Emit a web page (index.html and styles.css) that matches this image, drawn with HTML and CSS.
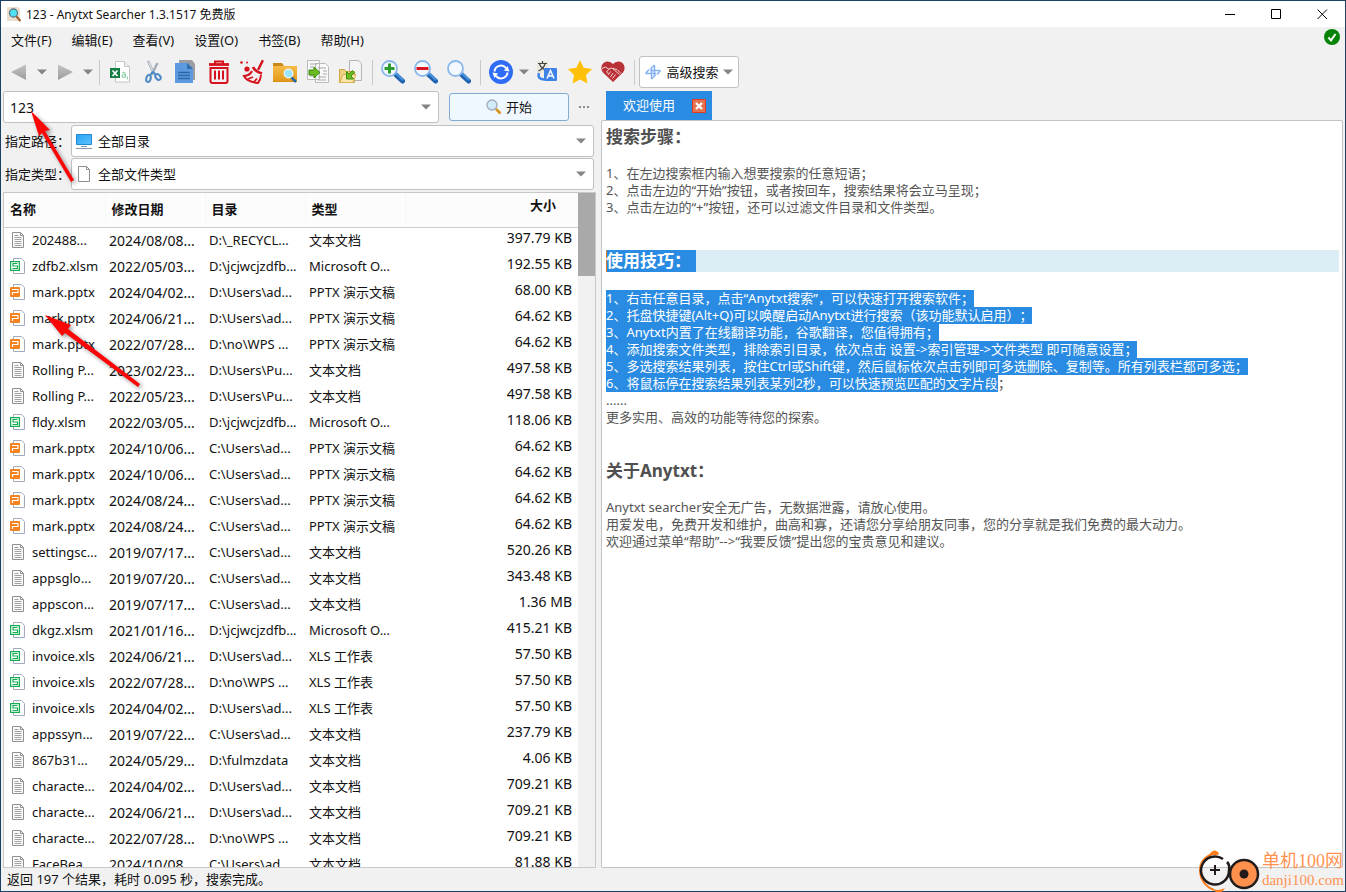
FILE: index.html
```html
<!DOCTYPE html>
<html lang="zh-CN">
<head>
<meta charset="utf-8">
<title>123 - Anytxt Searcher 1.3.1517 免费版</title>
<link rel="stylesheet" href="styles.css">
</head>
<body>
<svg class="defs" aria-hidden="true">
  <defs>
    <linearGradient id="grey" x1="0" y1="0" x2="0" y2="1"><stop offset="0" stop-color="#c4c4c4"/><stop offset="1" stop-color="#9c9c9c"/></linearGradient>
    <linearGradient id="amber" x1="0" y1="0" x2="0" y2="1"><stop offset="0" stop-color="#f5bb45"/><stop offset="1" stop-color="#e3991a"/></linearGradient>
    <linearGradient id="screen" x1="0" y1="0" x2="1" y2="1"><stop offset="0" stop-color="#29a3f5"/><stop offset="1" stop-color="#5cc4ff"/></linearGradient>
    <symbol id="down" viewBox="0 0 10 6"><path d="M0 .5h10L5 5.500z" fill="#858585"/></symbol>
    <symbol id="lens" viewBox="0 0 24 24"><path d="M14 14l7.500 7" stroke="#1f62b0" stroke-width="5" stroke-linecap="round"/><path d="M14.500 13l7 6.500" stroke="#4b94de" stroke-width="2" stroke-linecap="round"/><circle cx="8.500" cy="8.500" r="7.500" fill="#f4f9ff" stroke="#8bb8ea" stroke-width="1.800"/></symbol>
    <symbol id="txt" viewBox="0 0 16 16"><path d="M2.500.5h8l3 3v12h-11z" fill="#fafafa" stroke="#909090"/><path d="M10.500.5v3h3" fill="none" stroke="#909090"/><path d="M4.500 3.500h4M4.500 5.500h7M4.500 7.500h7M4.500 9.500h7M4.500 11.500h7M4.500 13.500h7" stroke="#a2a2a2"/></symbol>
    <symbol id="xls" viewBox="0 0 16 16"><path d="M3.500.5h8l3 3v12h-11z" fill="#fff" stroke="#a3abba"/><path d="M.6 3.600h8.800v8.800H.6z" fill="#fff" stroke="#17ad55" stroke-width="1.200"/><path d="M7.500 5.500H3v2.500h4.500v2.500H2.500" fill="none" stroke="#17ad55" stroke-width="1.200"/></symbol>
    <symbol id="ppt" viewBox="0 0 16 16"><path d="M3.500.5h8l3 3v12h-11z" fill="#fff" stroke="#a3abba"/><rect y="3" width="10" height="10" rx="1" fill="#f5821f"/><path d="M2.500 11V8.500H8V5.500H2" fill="none" stroke="#fff" stroke-width="1.200"/></symbol>
  </defs>
</svg>
<main class="window">
  <header class="titlebar">
    <svg class="i16" viewBox="0 0 16 16"><path d="M1 1.500L11 .5l3 2V15H1z" fill="#eadfce"/><path d="M10 10l4.500 5" stroke="#a05a28" stroke-width="2"/><circle cx="7.500" cy="7" r="4" fill="#4ee3f2" stroke="#557b8c" stroke-width="1.300"/></svg>
    <h1>123 - Anytxt Searcher 1.3.1517 免费版</h1>
    <button class="win" aria-label="最小化"><svg viewBox="0 0 11 11"><path d="M0 5.500h10"/></svg></button>
    <button class="win" aria-label="最大化"><svg viewBox="0 0 11 11"><path d="M.5.5h9v9h-9z"/></svg></button>
    <button class="win" aria-label="关闭"><svg viewBox="0 0 11 11"><path d="M.5.5l9.500 9.500M10 .5L.5 10"/></svg></button>
  </header>
  <nav class="menubar">
    <button>文件(F)</button><button>编辑(E)</button><button>查看(V)</button><button>设置(O)</button><button>书签(B)</button><button>帮助(H)</button>
    <svg class="i16 synced" viewBox="0 0 16 16"><circle cx="8" cy="8" r="8" fill="#078407"/><path d="M4.500 8.500l2.500 2.800L11.500 5" fill="none" stroke="#fff" stroke-width="2"/></svg>
  </nav>
  <div class="toolbar">
    <button class="tool" aria-label="后退"><svg viewBox="0 0 24 24"><path d="M4 12L19 4.500v15.500z" fill="url(#grey)"/></svg></button>
    <button class="drop" aria-label="后退记录"><svg><use href="#down"/></svg></button>
    <button class="tool" aria-label="前进"><svg viewBox="0 0 24 24"><path d="M20 12L5 4.500v15.500z" fill="url(#grey)"/></svg></button>
    <button class="drop" aria-label="前进记录"><svg><use href="#down"/></svg></button>
    <span class="sep"></span>
    <button class="tool" aria-label="导出"><svg viewBox="0 0 24 24"><path d="M7.500 1.500h9l5 5v15.500h-14z" fill="#fff" stroke="#c6c6c6"/><path d="M16.500 1.500v5h5" fill="#eee" stroke="#c6c6c6"/><rect x="2" y="8" width="10" height="10" fill="#167c45"/><path d="M4.500 10.500l5 5.500M9.500 10.500l-5 5.500" stroke="#fff" stroke-width="1.700"/><path d="M14 13q3.500-1 3.500 1v3.500M17.500 14.500q-3.500 0-3.500 1.500t1.500 1.500 2-2M19.500 16.500v3" fill="none" stroke="#8fcfa9" stroke-width="1.200"/></svg></button>
    <button class="tool" aria-label="剪切"><svg viewBox="0 0 24 24"><path d="M7 1l6 13M16.500 3l-6 12" stroke="#a3acb7" stroke-width="2.400"/><path d="M7.500 2l5 11" stroke="#e5eaf0"/><ellipse cx="7.500" cy="18.500" rx="2.200" ry="3.500" transform="rotate(15 7.500 18.500)" fill="none" stroke="#4d8ac6" stroke-width="2"/><path d="M9 15l3-3 3 3" fill="none" stroke="#4d8ac6" stroke-width="2"/><ellipse cx="17" cy="17" rx="2.200" ry="3.200" transform="rotate(-42 17 17)" fill="none" stroke="#4d8ac6" stroke-width="2"/></svg></button>
    <button class="tool" aria-label="复制"><svg viewBox="0 0 24 24"><path d="M5 0h13l3 4v16H5z" fill="#9b9fa4"/><path d="M1 3h13l5 6v14H1z" fill="#5c99de"/><path d="M13 3v6h6z" fill="#326dad"/><path d="M4 12.500h12M4 15.500h12M4 18.500h12" stroke="#2f69aa" stroke-width="1.300"/></svg></button>
    <button class="tool" aria-label="删除"><svg viewBox="0 0 24 24" fill="none" stroke="#d5121d"><path d="M2 4.500h20" stroke-width="2.800"/><path d="M8 4V1.500h8V4" stroke-width="2"/><path d="M3.500 8h17v13q0 2-2 2h-13q-2 0-2-2z" stroke-width="2"/><path d="M8 10.500v9M12 10.500v9M16 10.500v9" stroke-width="2"/></svg></button>
    <button class="tool" aria-label="清理"><svg viewBox="0 0 24 24" fill="none" stroke="#d5121d"><path d="M22.500 1L18.500 9" stroke-width="2.500" stroke-linecap="round"/><path d="M13 7q2 4.500 9 6.500" stroke-width="2.800"/><path d="M12 11q-2 4.500-8 5 3 6 14 7 2.500-3 3-8" stroke-width="2"/><path d="M8 19l5-2M14 22l3-3.500" stroke-width="1.800"/><circle cx="7" cy="9" r="2.600" fill="#d5121d" stroke="none"/><circle cx="1.500" cy="2.500" r="1.300" fill="#d5121d" stroke="none"/><circle cx="7" cy="2.500" r="1" fill="#d5121d" stroke="none"/></svg></button>
    <button class="tool" aria-label="打开目录"><svg viewBox="0 0 24 24"><path d="M0 3h9l2 3h13v16H0z" fill="#c9861a"/><path d="M0 6h24v15.500H0z" fill="url(#amber)"/><path d="M18 17l5 5" stroke="#2868a5" stroke-width="2.500"/><circle cx="15.500" cy="13.500" r="4.300" fill="#9be5ff" stroke="#eaf8ff" stroke-width="1.300"/></svg></button>
    <button class="tool" aria-label="复制文件"><svg viewBox="0 0 24 24"><path d="M1.500.5h12v19h-12zM9.500 3.500h10l3 3v16h-13z" fill="#f8f8f8" stroke="#bbb"/><path d="M4 4h7M4 7h4M4 16h4M12 8h8M12 17h8M12 20h8M17 11h4M17 14h4" stroke="#a9a9a9"/><path d="M3 10h5V7l6 5.500L8 18v-3H3z" fill="#68ba1f" stroke="#3d8c12"/></svg></button>
    <button class="tool" aria-label="移动文件"><svg viewBox="0 0 24 24"><path d="M10.500.5h9l3 3v17h-12z" fill="#f4f4f4" stroke="#b4b4b4"/><path d="M.5 9.500h5l2 2h8v11H.5z" fill="#ebcf82" stroke="#d3a641"/><path d="M1 22.500l3-8h13l-3 8z" fill="#f8e6a8" stroke="#d8b452"/><path d="M7.500 19v-7.500l2.500 2.500 3.500-3.500 2 2-3.500 3.500L14.500 19z" fill="#6cbc22" stroke="#3d8c12"/></svg></button>
    <span class="sep"></span>
    <button class="tool" aria-label="放大"><svg viewBox="0 0 24 24"><use href="#lens"/><path d="M8.500 3.500v10M3.500 8.500h10" stroke="#299c2d" stroke-width="3"/></svg></button>
    <button class="tool" aria-label="缩小"><svg viewBox="0 0 24 24"><use href="#lens"/><path d="M2.500 8.500h12" stroke="#dc1420" stroke-width="3"/></svg></button>
    <button class="tool" aria-label="重置缩放"><svg viewBox="0 0 24 24"><use href="#lens"/></svg></button>
    <span class="sep"></span>
    <button class="tool" aria-label="刷新"><svg viewBox="0 0 24 24"><circle cx="12" cy="12" r="12" fill="#2f6df6"/><path d="M5.500 11.500A6.500 6.500 0 0 1 17 8M18.500 12.500A6.500 6.500 0 0 1 7 16" fill="none" stroke="#fff" stroke-width="2"/><path d="M15 10.500l5.500 1-2-5.500zM9 13.500l-5.500-1 2 5.500z" fill="#fff"/></svg></button>
    <button class="drop" aria-label="刷新选项"><svg><use href="#down"/></svg></button>
    <button class="tool" aria-label="翻译"><svg viewBox="0 0 24 24"><path d="M2 1h11v12H2z" fill="#ece8dc"/><path d="M3 3.500h9M7.500 1v2.500M3.500 11Q9 8 10 4M4.500 4q2 5 7 6.500" fill="none" stroke="#444" stroke-width="1.200"/><path d="M4 13q-2 6 5 6.500" fill="none" stroke="#3f83e9" stroke-width="2.500"/><rect x="9" y="8" width="13" height="13" rx="1" fill="#3f83e9"/><path d="M12 18.500l3.500-8 3.500 8M13.500 16h4" fill="none" stroke="#fff" stroke-width="1.500"/></svg></button>
    <button class="tool" aria-label="收藏"><svg viewBox="0 0 24 24"><path d="M12 0l3.700 7.700 8.300 1.200-6 6 1.400 8.600L12 19.400 4.600 23.500 6 14.900l-6-6 8.300-1.200z" fill="#ffc107"/></svg></button>
    <button class="tool" aria-label="捐助"><svg viewBox="0 0 24 24"><path d="M12 22L2 12.500C-2 7 2 1.500 6.500 1.500Q10 1.500 12 4q2-2.500 5.500-2.500C22 1.500 26 7 22 12.500z" fill="#b93036"/><path d="M1 8.500l3.500-1.500 3 2 3.500-1 7.500 6.500M8 9l-2.500 3 2 1.500M9.500 11.500l-2.500 3.500M12 13l-2.500 4M14.500 14.500l-3 4M12 8.500l4 1 4 4" fill="none" stroke="#f5d5d5"/></svg></button>
    <span class="sep"></span>
    <button class="advanced"><svg class="i16" viewBox="0 0 16 16" fill="none" stroke="#86b2f2" stroke-width="1.500"><path d="M.5 9.500H11M4 5.500L.5 9.500M15.500 6.500H5M12 10.500l3.500-4M9.500 1v11.500M9.500 1L5.500 5M6.500 15V4M6.500 15l4-4"/></svg>高级搜索<svg class="arrow"><use href="#down"/></svg></button>
  </div>
  <div class="panes">
    <section class="left">
      <div class="searchrow">
        <div class="combo"><input type="text" value="123" aria-label="搜索内容"><button class="drop" aria-label="搜索历史"><svg><use href="#down"/></svg></button></div>
        <button class="start"><svg class="i16" viewBox="0 0 16 16"><path d="M10 10l4.500 4.500" stroke="#d99420" stroke-width="2.600"/><circle cx="6" cy="6" r="5" fill="#d3ebfa" stroke="#a0a9b5" stroke-width="1.300"/></svg>开始</button>
        <button class="more" aria-label="更多"><svg viewBox="0 0 11 3"><path d="M0 0h2v2H0zM4 0h2v2H4zM8 0h2v2H8z" fill="#8c8c8c"/></svg></button>
      </div>
      <div class="field"><label for="path">指定路径：</label><div class="combo"><svg class="i16" viewBox="0 0 16 16"><path d="M.5 1.500h15v10H.5z" fill="url(#screen)" stroke="#2487cf"/><path d="M5 13.500h6M0 15.500h16" stroke="#8799aa"/></svg><select id="path"><option>全部目录</option></select><svg class="arrow"><use href="#down"/></svg></div></div>
      <div class="field"><label for="type">指定类型：</label><div class="combo"><svg class="i16" viewBox="0 0 16 16"><path d="M2.500.5h8l3 3v12h-11z" fill="#fff" stroke="#909090"/><path d="M10.500.5v3h3" fill="none" stroke="#909090"/></svg><select id="type"><option>全部文件类型</option></select><svg class="arrow"><use href="#down"/></svg></div></div>
      <div class="results">
        <div class="tablebox">
          <table>
            <thead><tr><th class="c1">名称</th><th class="c2">修改日期</th><th class="c2">目录</th><th class="c2">类型</th><th class="size">大小</th></tr></thead>
            <tbody id="rows"></tbody>
          </table>
        </div>
        <div class="scroll"><div class="thumb"></div></div>
      </div>
    </section>
    <section class="right">
      <div class="tabs"><div class="tab">欢迎使用<button aria-label="关闭标签"><svg viewBox="0 0 14 14"><path d="M.5.5h13v13H.5z" fill="#e3744f" stroke="#e23a22"/><path d="M4 4l6 6M10 4l-6 6" stroke="#fff" stroke-width="2.200"/></svg></button></div></div>
      <article class="doc">
        <h2>搜索步骤：</h2>
        <p>1、在左边搜索框内输入想要搜索的任意短语；<br>2、点击左边的“开始”按钮，或者按回车，搜索结果将会立马呈现；<br>3、点击左边的“+”按钮，还可以过滤文件目录和文件类型。</p>
        <h2 class="current"><mark>使用技巧：</mark></h2>
        <p><mark>1、右击任意目录，点击“Anytxt搜索”，可以快速打开搜索软件；</mark><br><mark>2、托盘快捷键(Alt+Q)可以唤醒启动Anytxt进行搜索（该功能默认启用）；</mark><br><mark>3、Anytxt内置了在线翻译功能，谷歌翻译，您值得拥有；</mark><br><mark>4、添加搜索文件类型，排除索引目录，依次点击 设置-&gt;索引管理-&gt;文件类型 即可随意设置；</mark><br><mark>5、多选搜索结果列表，按住Ctrl或Shift键，然后鼠标依次点击列即可多选删除、复制等。所有列表栏都可多选；</mark><br><mark>6、将鼠标停在搜索结果列表某列2秒，可以快速预览匹配的文字片段</mark>；<br>......<br>更多实用、高效的功能等待您的探索。</p>
        <h2>关于Anytxt：</h2>
        <p>Anytxt searcher安全无广告，无数据泄露，请放心使用。<br>用爱发电，免费开发和维护，曲高和寡，还请您分享给朋友同事，您的分享就是我们免费的最大动力。<br>欢迎通过菜单“帮助”--&gt;“我要反馈”提出您的宝贵意见和建议。</p>
      </article>
    </section>
  </div>
  <footer class="status">返回 197 个结果，耗时 0.095 秒，搜索完成。</footer>
</main>
<svg class="pointers" viewBox="0 0 150 400" aria-hidden="true"><g fill="#fb0505"><path d="M31 111L50 130 45 131 74 180 71 182 42 133 39 136z"/><path d="M45 315L71 325 68 329 140 384 138 387 65 333 62 336z"/></g></svg>
<div class="watermark">
  <svg viewBox="0 0 64 42" fill="none"><path d="M16 40A21 21 0 0 1 2 20Q2 8 17 3" stroke="#ff7b17" stroke-width="2"/><path d="M11 5Q16-3 21 3l-1 2zM13 38q6 4 14 0l-3 4h-6z" fill="#ff7b17"/><path d="M25 9A14 14 0 1 0 31 20Q32 15 29 12" stroke="#211b1b" stroke-width="2.500"/><path d="M17 15v10M12 20h10" stroke="#211b1b" stroke-width="2"/><circle cx="46" cy="24" r="14" fill="#ff914c" stroke="#211b1b" stroke-width="2.500"/><circle cx="46" cy="24" r="4.500" fill="#211b1b"/></svg>
  <div><strong>单机100网</strong><span>danji100.com</span></div>
</div>
<script src="app.js"></script>
</body>
</html>
```
FILE: styles.css
```css
* { box-sizing: border-box; }
body { margin: 0; color: #111; font: 13px/17px "Noto Sans", "Noto Sans CJK SC", sans-serif; text-spacing-trim: space-all; }
button, input, select { font: inherit; color: inherit; background: none; border: 0; padding: 0; margin: 0; }
h1, h2, p { margin: 0; }
svg { display: block; flex: none; overflow: visible; }
.defs { position: absolute; width: 0; height: 0; }
.i16 { width: 16px; height: 16px; }
.arrow, .drop svg { width: 10px; height: 6px; }
.window { display: flex; flex-direction: column; height: 100vh; border: 1px solid #1c4167; background: #f1f1f1; }
.titlebar { display: flex; align-items: center; height: 26px; padding-left: 5px; background: #fff; }
.titlebar h1 { flex: 1; margin-left: 4px; font-size: 12px; font-weight: 400; white-space: nowrap; }
.win { display: grid; place-items: center; width: 46px; height: 26px; }
.win svg { width: 11px; height: 11px; fill: none; stroke: #000; }
.menubar { display: flex; align-items: center; gap: 20px; height: 26px; padding: 0 5px 0 10px; }
.synced { margin: 0 0 6px auto; }
.toolbar { display: flex; align-items: center; height: 38px; padding-left: 1px; }
.tool { display: grid; place-items: center; width: 33px; height: 32px; }
.tool svg { width: 24px; height: 24px; }
.drop { display: grid; place-items: center; width: 13px; height: 30px; }
.sep { width: 1px; height: 25px; margin: 0 3px 0 5px; background: #c9c9c9; }
.advanced { display: flex; align-items: center; justify-content: center; gap: 5px; width: 100px; height: 32px; margin-left: 1px; border: 1px solid #c0c0c0; border-radius: 3px; background: #fff; }
.advanced .arrow { margin-left: -1px; }
.panes { display: grid; grid-template-columns: 595fr 742fr; gap: 5px; flex: 1; min-height: 0; padding-right: 2px; }
.left, .right { display: flex; flex-direction: column; min-width: 0; min-height: 0; }
.left { padding-left: 2px; gap: 1px; }
.searchrow { display: flex; align-items: center; margin-bottom: 1px; }
.combo { display: flex; align-items: center; flex: 1; min-width: 0; height: 32px; padding: 0 7px 0 4px; border: 1px solid #c0c0c0; border-radius: 3px; background: #fff; }
.combo input, .combo select { flex: 1; min-width: 0; height: 28px; appearance: none; outline: 0; }
.combo select { padding-left: 6px; }
.searchrow .combo { padding: 0 6px; }
.searchrow input { font-size: 14px; }
.start { display: flex; align-items: center; justify-content: center; gap: 4px; width: 120px; height: 28px; margin-left: 10px; border: 1px solid #80acd3; border-radius: 3px; background: #f0f8ff; }
.more { display: grid; place-items: center; width: 27px; height: 28px; padding-left: 4px; }
.more svg { width: 11px; height: 3px; }
.field { display: flex; align-items: center; padding-right: 2px; }
.field label { width: 68px; padding-left: 2px; white-space: nowrap; }
.results { display: flex; flex: 1; min-height: 0; margin-top: 1px; border: 1px solid #c8c8c8; background: #fff; }
.tablebox { flex: 1; min-width: 0; overflow: hidden; }
table { width: 100%; table-layout: fixed; border-collapse: collapse; }
th { height: 34px; padding: 0 0 0 6px; border-right: 1px solid #f7f7f7; border-bottom: 1px solid #ccc; background: #fcfcfc; text-align: left; }
.c1 { width: 101px; }
.c2 { width: 100px; }
th.size { padding: 0 22px 8px 0; text-align: right; border-right: 0; }
td { height: 26px; padding: 0 0 0 4px; white-space: nowrap; overflow: hidden; }
td.date { font-size: 14px; }
td.size { padding: 0 6px 5px 0; font-size: 14px; text-align: right; }
.name { display: flex; align-items: center; gap: 6px; padding-left: 2px; }
.name svg { width: 16px; height: 16px; }
.scroll { width: 17px; background: #f1f1f1; }
.thumb { height: 83px; background: #a9a9a9; }
.tabs { display: flex; height: 29px; padding-left: 5px; }
.tab { display: flex; align-items: center; gap: 17px; padding: 0 6px 0 17px; background: #2a8be2; color: #fff; }
.tab svg { width: 14px; height: 14px; }
.doc { flex: 1; min-height: 0; padding: 5px 3px 0 4px; border: 1px solid #c4c4c4; border-radius: 2px; background: #fff; color: #555; overflow: hidden; }
.doc h2 { font-size: 17px; line-height: 22px; color: #505050; }
.doc p { margin: 17px 0 34px; }
.doc .current { background: #dcedf6; }
.doc .current + p { margin-top: 18px; }
mark { display: inline-block; background: #2a8be2; color: #fff; vertical-align: top; }
.current mark { padding-right: 5px; box-shadow: inset 1px 0 #d87a20; }
.status { height: 23px; padding: 3px 6px; }
.pointers { position: absolute; left: 0; top: 0; width: 150px; height: 400px; pointer-events: none; filter: drop-shadow(2px 2px 2px #0006); }
.watermark { position: absolute; right: 2px; bottom: 0; display: flex; align-items: center; color: #ff9250; font-family: "Liberation Serif", "Noto Sans CJK SC", serif; }
.watermark svg { width: 64px; height: 42px; }
.watermark strong, .watermark span { display: block; font-weight: 400; line-height: 19px; white-space: nowrap; }
.watermark strong { font-size: 18px; }
.watermark span { font-size: 15px; }
```
FILE: app.js
```js
const TXT = "文本文档", PPT = "PPTX 演示文稿", XLS = "XLS 工作表", OFFICE = "Microsoft O...";
const results = [
  ["txt", "202488...", "2024/08/08", "D:\\_RECYCL...", TXT, "397.79 KB"],
  ["xls", "zdfb2.xlsm", "2022/05/03", "D:\\jcjwcjzdfb...", OFFICE, "192.55 KB"],
  ["ppt", "mark.pptx", "2024/04/02", "D:\\Users\\ad...", PPT, "68.00 KB"],
  ["ppt", "mark.pptx", "2024/06/21", "D:\\Users\\ad...", PPT, "64.62 KB"],
  ["ppt", "mark.pptx", "2022/07/28", "D:\\no\\WPS ...", PPT, "64.62 KB"],
  ["txt", "Rolling P...", "2023/02/23", "D:\\Users\\Pu...", TXT, "497.58 KB"],
  ["txt", "Rolling P...", "2022/05/23", "D:\\Users\\Pu...", TXT, "497.58 KB"],
  ["xls", "fldy.xlsm", "2022/03/05", "D:\\jcjwcjzdfb...", OFFICE, "118.06 KB"],
  ["ppt", "mark.pptx", "2024/10/06", "C:\\Users\\ad...", PPT, "64.62 KB"],
  ["ppt", "mark.pptx", "2024/10/06", "C:\\Users\\ad...", PPT, "64.62 KB"],
  ["ppt", "mark.pptx", "2024/08/24", "C:\\Users\\ad...", PPT, "64.62 KB"],
  ["ppt", "mark.pptx", "2024/08/24", "C:\\Users\\ad...", PPT, "64.62 KB"],
  ["txt", "settingsc...", "2019/07/17", "C:\\Users\\ad...", TXT, "520.26 KB"],
  ["txt", "appsglo...", "2019/07/20", "C:\\Users\\ad...", TXT, "343.48 KB"],
  ["txt", "appscon...", "2019/07/17", "C:\\Users\\ad...", TXT, "1.36 MB"],
  ["xls", "dkgz.xlsm", "2021/01/16", "D:\\jcjwcjzdfb...", OFFICE, "415.21 KB"],
  ["xls", "invoice.xls", "2024/06/21", "D:\\Users\\ad...", XLS, "57.50 KB"],
  ["xls", "invoice.xls", "2022/07/28", "D:\\no\\WPS ...", XLS, "57.50 KB"],
  ["xls", "invoice.xls", "2024/04/02", "D:\\Users\\ad...", XLS, "57.50 KB"],
  ["txt", "appssyn...", "2019/07/22", "C:\\Users\\ad...", TXT, "237.79 KB"],
  ["txt", "867b31...", "2024/05/29", "D:\\fulmzdata", TXT, "4.06 KB"],
  ["txt", "characte...", "2024/04/02", "D:\\Users\\ad...", TXT, "709.21 KB"],
  ["txt", "characte...", "2024/06/21", "D:\\Users\\ad...", TXT, "709.21 KB"],
  ["txt", "characte...", "2022/07/28", "D:\\no\\WPS ...", TXT, "709.21 KB"],
  ["txt", "FaceBea...", "2024/10/08", "C:\\Users\\ad...", TXT, "81.88 KB"]
];
document.getElementById("rows").innerHTML = results.map(([icon, name, date, dir, type, size]) =>
  `<tr><td><span class="name"><svg><use href="#${icon}"/></svg>${name}</span></td><td class="date">${date}...</td><td>${dir}</td><td>${type}</td><td class="size">${size}</td></tr>`
).join("");
```
